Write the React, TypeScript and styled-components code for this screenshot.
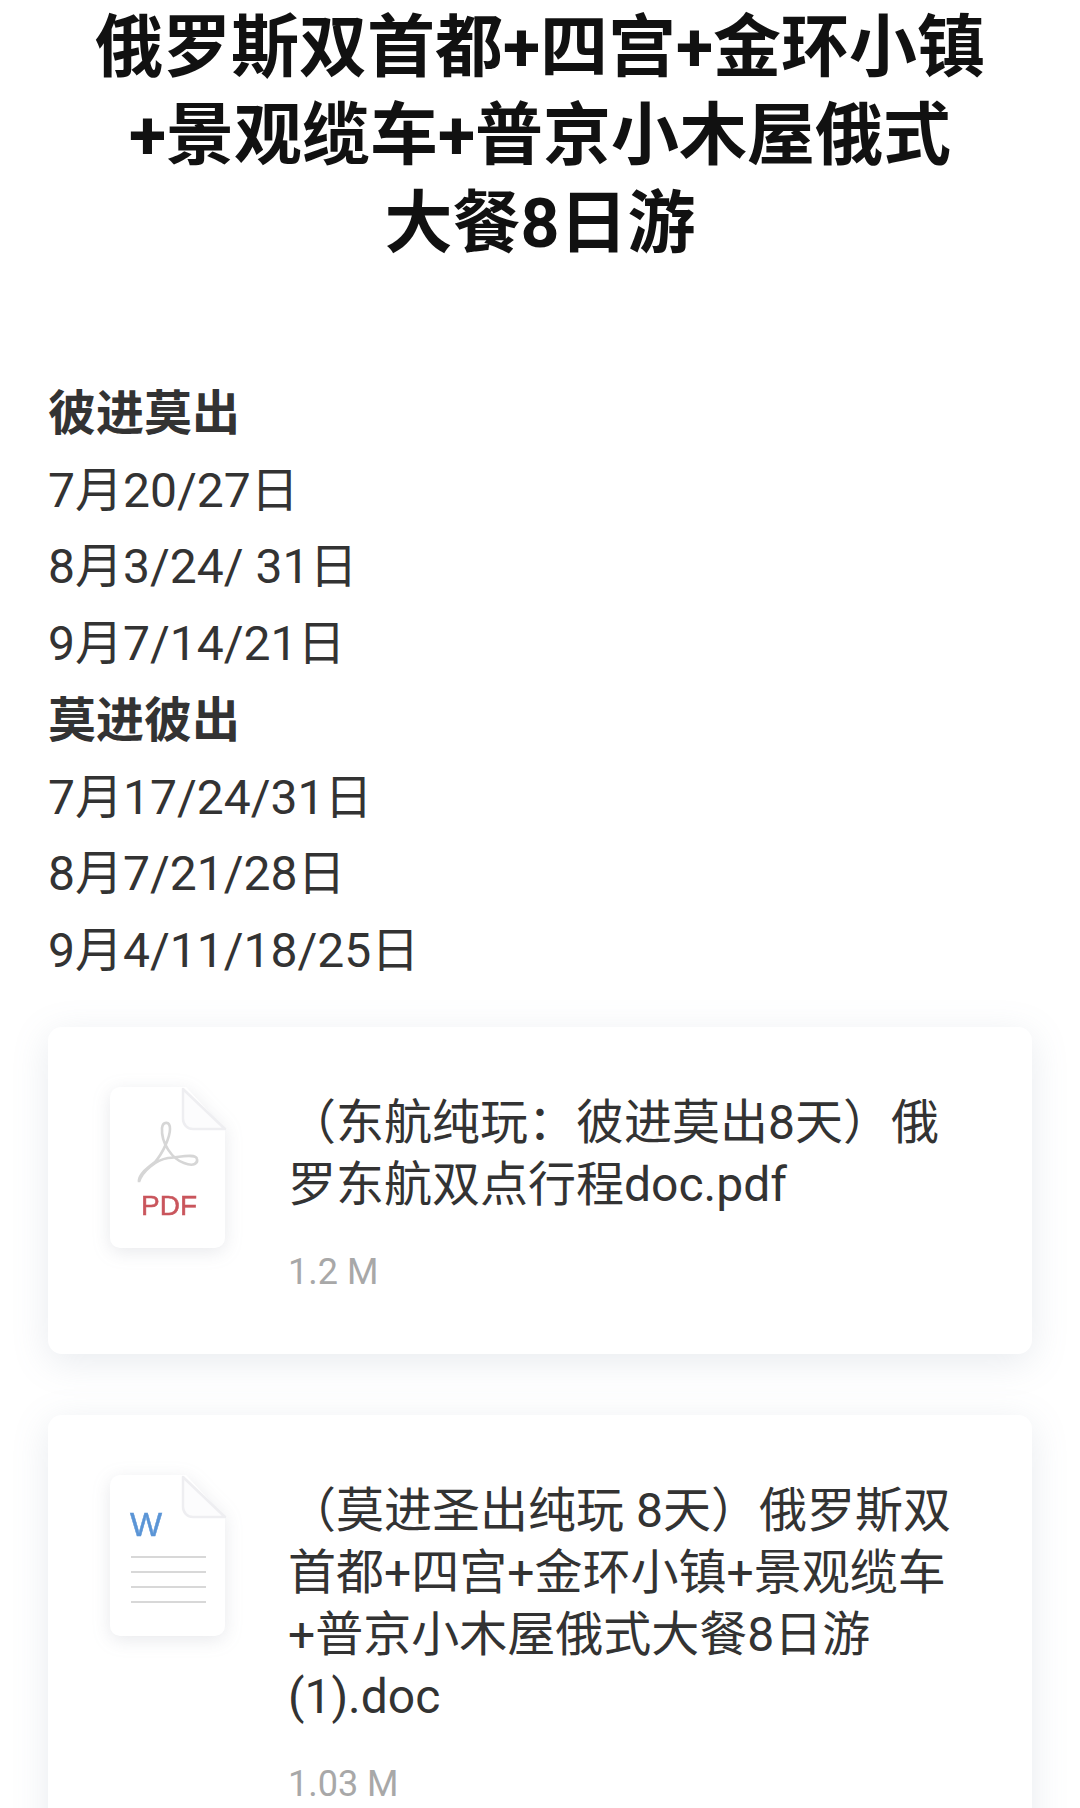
import React from 'react';
import styled, { createGlobalStyle } from 'styled-components';

const Global = createGlobalStyle`
  html, body { margin: 0; padding: 0; background: #fff; }
  body { font-family: "Roboto", "Noto Sans CJK SC", sans-serif; overflow: hidden; }
`;
const Page = styled.div`
  width: 1080px; height: 1808px; overflow: hidden; padding: 0 48px; box-sizing: border-box;
`;
const Title = styled.h1`
  margin: 0 -10px; padding-top: 4px; font-size: 68px; line-height: 88px; font-weight: 700; color: #111; text-align: center;
`;
const Dates = styled.div`
  margin-top: 108px;
`;
const Line = styled.div<{ $bold?: boolean }>`
  font-size: 48px; line-height: 76.7px; color: #333; font-weight: ${p => (p.$bold ? 700 : 400)};
`;
const Card = styled.div`
  margin-top: 37px; background: #fff; border-radius: 14px; padding: 60px 60px 60px 62px;
  box-shadow: 0 8px 36px rgba(120,135,160,.17); display: flex; gap: 63px;
  & + & { margin-top: 61px; }
`;
const FileIcon = styled.svg`
  flex: none; width: 115px; height: 161px; overflow: visible; filter: drop-shadow(0 4px 9px rgba(100,110,130,.15));
`;
const Info = styled.div`
  flex: 1; min-width: 0; padding-top: 5px;
`;
const Name = styled.div`
  font-size: 48px; line-height: 62px; color: #333;
`;
const Size = styled.div`
  margin-top: 34px; font-size: 36px; line-height: 44px; color: #a8a8a8;
`;
const Fold = () => (
  <>
    <path d="M10 0H76L115 42V151a10 10 0 0 1-10 10H10a10 10 0 0 1-10-10V10a10 10 0 0 1 10-10Z" fill="#fff" />
    <path d="M73 2L115 42H83a10 10 0 0 1-10-10Z" fill="#fcfcfd" stroke="#eeeef1" strokeWidth="2.5" strokeLinejoin="round" />
  </>
);
export default function App() {
  return (
    <Page>
      <Global />
      <Title>俄罗斯双首都+四宫+金环小镇<br />+景观缆车+普京小木屋俄式<br />大餐8日游</Title>
      <Dates>
        <Line $bold>彼进莫出</Line>
        <Line>7月20/27日</Line>
        <Line>8月3/24/ 31日</Line>
        <Line>9月7/14/21日</Line>
        <Line $bold>莫进彼出</Line>
        <Line>7月17/24/31日</Line>
        <Line>8月7/21/28日</Line>
        <Line>9月4/11/18/25日</Line>
      </Dates>
      <Card>
        <FileIcon viewBox="0 0 115 161">
          <Fold />
          <path d="M29 95C28 88 36 82 45 75C53 66 60 50 60 42C60 34 53 34 52 41C51 56 62 72 74 76C84 80 88 76 87 72C86 66 70 70 58 71C46 73 32 84 29 95Z" fill="none" stroke="#d6d6d6" strokeWidth="2.6" />
          <text x="59" y="128" textAnchor="middle" fontFamily="Liberation Sans" fontSize="28" fill="#c9555c" stroke="#c9555c" strokeWidth="0.5">PDF</text>
        </FileIcon>
        <Info>
          <Name>（东航纯玩：彼进莫出8天）俄罗东航双点行程doc.pdf</Name>
          <Size>1.2 M</Size>
        </Info>
      </Card>
      <Card>
        <FileIcon viewBox="0 0 115 161">
          <Fold />
          <text x="20" y="61" fontFamily="Liberation Sans" fontSize="34" fill="#5b95d6" stroke="#5b95d6" strokeWidth="0.5">W</text>
          <path d="M21 82H96M21 97H96M21 112H96M21 127H96" stroke="#d8d8d8" strokeWidth="2" />
        </FileIcon>
        <Info>
          <Name>（莫进圣出纯玩 8天）俄罗斯双首都+四宫+金环小镇+景观缆车+普京小木屋俄式大餐8日游(1).doc</Name>
          <Size>1.03 M</Size>
        </Info>
      </Card>
    </Page>
  );
}
